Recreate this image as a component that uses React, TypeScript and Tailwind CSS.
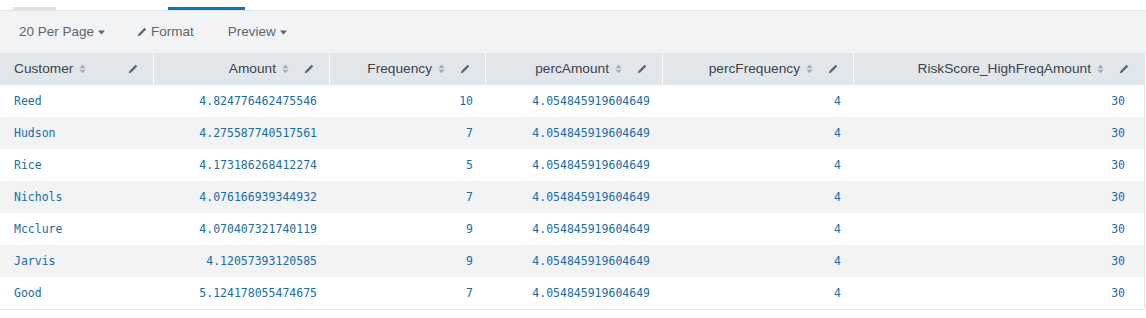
import React from "react";

const rows = [
  ["Reed", "4.824776462475546", "10", "4.054845919604649", "4", "30"],
  ["Hudson", "4.275587740517561", "7", "4.054845919604649", "4", "30"],
  ["Rice", "4.173186268412274", "5", "4.054845919604649", "4", "30"],
  ["Nichols", "4.076166939344932", "7", "4.054845919604649", "4", "30"],
  ["Mcclure", "4.070407321740119", "9", "4.054845919604649", "4", "30"],
  ["Jarvis", "4.12057393120585", "9", "4.054845919604649", "4", "30"],
  ["Good", "5.124178055474675", "7", "4.054845919604649", "4", "30"],
];

const cols = [
  { name: "Customer", w: "w-[154px]", left: true },
  { name: "Amount", w: "w-[176px]" },
  { name: "Frequency", w: "w-[156px]" },
  { name: "percAmount", w: "w-[177px]" },
  { name: "percFrequency", w: "w-[191px]" },
  { name: "RiskScore_HighFreqAmount", w: "flex-1" },
];

function Pencil({ color = "#5c6670" }: { color?: string }) {
  return (
    <svg width="10" height="10" viewBox="0 0 10 10" className="shrink-0">
      <polygon points="0.8,9.2 1.6,6.8 7.6,0.8 9.2,2.4 3.2,8.4" fill={color} />
    </svg>
  );
}

function Sort() {
  return (
    <svg width="7" height="10" viewBox="0 0 7 10" className="shrink-0">
      <polygon points="0.5,4.2 3.5,0.6 6.5,4.2" fill="#a3aab1" />
      <polygon points="0.5,5.8 3.5,9.4 6.5,5.8" fill="#a3aab1" />
    </svg>
  );
}

function Caret() {
  return (
    <svg width="7" height="5" viewBox="0 0 7 5" className="shrink-0">
      <polygon points="0,0.5 7,0.5 3.5,4.5" fill="#5c6670" />
    </svg>
  );
}

export default function App() {
  const sans = { fontFamily: '"Liberation Sans", Arial, sans-serif' };
  const mono = { fontFamily: '"DejaVu Sans Mono", monospace' };
  return (
    <div className="w-[1146px] h-[318px] bg-white overflow-hidden" style={sans}>
      {/* tabs strip */}
      <div className="h-[11px] border-b border-[#e0e3e7] flex items-end">
        <div className="ml-[13px] w-[43px] h-[3px] bg-[#dde2e6]" />
        <div className="ml-[112px] w-[77px] h-[3px] bg-[#0877b8]" />
      </div>
      {/* toolbar */}
      <div className="h-[42px] bg-[#f2f3f5] flex items-center text-[13.5px] text-[#5c6670]">
        <div className="ml-[19px] flex items-center gap-[4px]">
          <span>20 Per Page</span>
          <Caret />
        </div>
        <div className="ml-[32px] flex items-center gap-[4px]">
          <Pencil />
          <span>Format</span>
        </div>
        <div className="ml-[34px] flex items-center gap-[4px]">
          <span>Preview</span>
          <Caret />
        </div>
      </div>
      {/* table */}
      <div className="w-[1145px] border-r border-[#e1e6eb]">
        <div className="flex h-[32px] bg-[#e1e6eb] text-[13.7px] text-[#3c444d]">
          {cols.map((c, i) => (
            <div
              key={c.name}
              className={`${c.w} flex items-center pl-[14px] pr-[15px] ${
                i < cols.length - 1 ? "border-r border-white" : ""
              }`}
            >
              {c.left ? (
                <>
                  <span>{c.name}</span>
                  <span className="ml-[6px]"><Sort /></span>
                  <span className="ml-auto"><Pencil /></span>
                </>
              ) : (
                <>
                  <span className="ml-auto">{c.name}</span>
                  <span className="ml-[6px]"><Sort /></span>
                  <span className="ml-[15px]"><Pencil /></span>
                </>
              )}
            </div>
          ))}
        </div>
        {rows.map((r, ri) => (
          <div
            key={ri}
            className={`flex h-[32px] items-center pt-[2px] text-[11.5px] text-[#1a6ca6] ${
              ri % 2 === 1 ? "bg-[#f2f3f5]" : "bg-white"
            }`}
            style={mono}
          >
            {r.map((v, ci) => (
              <div
                key={ci}
                className={`${cols[ci].w} ${
                  ci === 0
                    ? "pl-[14px] text-left"
                    : ci === cols.length - 1
                    ? "pr-[19px] text-right"
                    : "pr-[12px] text-right"
                } ${ci < cols.length - 1 ? "border-r border-transparent" : ""}`}
              >
                {v}
              </div>
            ))}
          </div>
        ))}
        <div className="h-px bg-[#e1e6eb]" />
      </div>
    </div>
  );
}
